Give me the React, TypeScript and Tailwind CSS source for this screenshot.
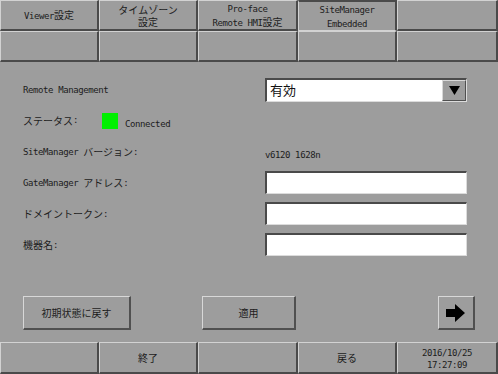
import React from "react";

// Latin runs use a narrow mono face, Japanese runs use Noto CJK
function T({ s }: { s: string }) {
  const parts = s.split(/([\x20-\x7E]+)/).filter((p) => p !== "");
  return (
    <>
      {parts.map((p, i) =>
        /^[\x20-\x7E]+$/.test(p) ? (
          <span key={i} className="font-['DejaVu_Sans_Mono',monospace] text-[9px] tracking-[-0.4px] whitespace-pre">
            {p}
          </span>
        ) : (
          <span key={i} className="font-['Noto_Sans_CJK_JP',sans-serif] text-[10px]">
            {p}
          </span>
        )
      )}
    </>
  );
}

const cell =
  "flex flex-col items-center justify-center text-center leading-[11px] text-[#1c1c1c] border-t border-l border-t-[#d2d2d2] border-l-[#d2d2d2] border-r-2 border-b-2 border-r-[#4a4a4a] border-b-[#4a4a4a]";

const activeCell =
  "flex flex-col items-center justify-center text-center leading-[11px] text-[#1c1c1c] border-t-2 border-l border-t-[#4a4a4a] border-l-[#d2d2d2] border-r-2 border-b border-r-[#4a4a4a] border-b-[#d2d2d2]";

const btn =
  "flex items-center justify-center h-[34px] bg-[#9d9d9d] border-t border-l border-t-[#d8d8d8] border-l-[#d8d8d8] border-r-2 border-b-2 border-r-[#505050] border-b-[#505050] text-[#1c1c1c]";

const field =
  "w-[202px] h-[23px] bg-white border-t-2 border-l-2 border-t-[#4a4a4a] border-l-[#4a4a4a] border-b border-r border-b-[#dcdcdc] border-r-[#dcdcdc]";

function Row({ label, children }: { label: React.ReactNode; children?: React.ReactNode }) {
  return (
    <div className="flex h-[31px] items-center">
      <div className="w-[242px] flex items-center leading-[12px] text-[#1c1c1c]">{label}</div>
      <div className="flex items-center">{children}</div>
    </div>
  );
}

export default function App() {
  return (
    <div className="w-[498px] h-[374px] bg-[#9d9d9d] flex flex-col overflow-hidden">
      <div className="grid grid-cols-[99px_99px_100px_99px_101px] grid-rows-[31px_31px]">
        <div className={cell}><div><T s="Viewer設定" /></div></div>
        <div className={cell}>
          <div className="leading-[11px]"><T s="タイムゾーン" /></div>
          <div className="leading-[11px]"><T s="設定" /></div>
        </div>
        <div className={cell}>
          <div className="leading-[11px]"><T s="Pro-face" /></div>
          <div className="leading-[11px]"><T s="Remote HMI設定" /></div>
        </div>
        <div className={activeCell}>
          <div className="leading-[11px]"><T s="SiteManager" /></div>
          <div className="leading-[11px]"><T s="Embedded" /></div>
        </div>
        <div className={cell} />
        <div className={cell} />
        <div className={cell} />
        <div className={cell} />
        <div className={cell} />
        <div className={cell} />
      </div>

      <div className="flex-1 flex flex-col pl-[23px] pt-[12px]">
        <Row label={<T s="Remote Management" />}>
          <div className="w-[202px] h-[24px] bg-white flex border-t-2 border-l-2 border-t-[#4a4a4a] border-l-[#4a4a4a] border-b border-r border-b-[#dcdcdc] border-r-[#dcdcdc]">
            <div className="flex-1 flex items-center pl-[3px] font-['Noto_Sans_CJK_JP',sans-serif] text-[13px] text-[#111]">有効</div>
            <div className="w-[24px] flex items-center justify-center bg-[#9d9d9d] border-t border-l border-t-[#d8d8d8] border-l-[#d8d8d8] border-r border-b border-r-[#505050] border-b-[#505050]">
              <svg width="11" height="9" viewBox="0 0 11 9">
                <polygon points="0,0 11,0 5.5,9" fill="#000" />
              </svg>
            </div>
          </div>
        </Row>
        <div className="flex h-[31px] items-center">
          <div className="w-[79px] flex items-center text-[#1c1c1c]"><T s="ステータス:" /></div>
          <div className="w-[16px] h-[16px] bg-[#00f000] mt-[1px]" />
          <div className="ml-[7px] text-[#1c1c1c] mt-[1px]"><T s="Connected" /></div>
        </div>
        <Row label={<T s="SiteManager バージョン:" />}>
          <span className="text-[#1c1c1c]"><T s="v6120 1628n" /></span>
        </Row>
        <Row label={<T s="GateManager アドレス:" />}>
          <div className={field} />
        </Row>
        <Row label={<T s="ドメイントークン:" />}>
          <div className={field} />
        </Row>
        <Row label={<T s="機器名:" />}>
          <div className={field} />
        </Row>

        <div className="flex mt-[36px]">
          <div className={btn + " w-[108px]"}><T s="初期状態に戻す" /></div>
          <div className={btn + " w-[94px] ml-[71px]"}><T s="適用" /></div>
          <div className={btn + " w-[37px] ml-[142px]"}>
            <svg width="20" height="18" viewBox="0 0 20 18">
              <polygon points="0,5 9,5 9,0 19,9 9,18 9,13 0,13" fill="#000" />
            </svg>
          </div>
        </div>
      </div>

      <div className="grid grid-cols-[99px_99px_100px_99px_101px] h-[32px]">
        <div className={cell} />
        <div className={cell}><T s="終了" /></div>
        <div className={cell} />
        <div className={cell}><T s="戻る" /></div>
        <div className={cell + " leading-[9px]"}>
          <div className="leading-[9px]"><T s="2016/10/25" /></div>
          <div className="leading-[9px]"><T s="17:27:09" /></div>
        </div>
      </div>
    </div>
  );
}
